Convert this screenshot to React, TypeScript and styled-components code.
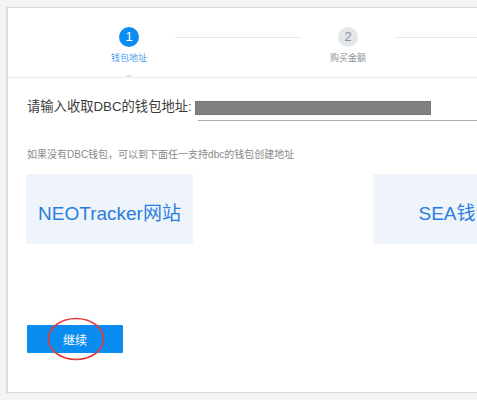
import React from "react";
import styled, { createGlobalStyle } from "styled-components";

const Global = createGlobalStyle`
  html, body { margin: 0; padding: 0; background: #f3f3f3; overflow: hidden; }
  body { font-family: "Liberation Sans", "Noto Sans CJK SC", sans-serif; }
  * { box-sizing: border-box; }
`;

const Page = styled.div`
  width: 477px;
  height: 400px;
  padding: 7px 0 0 6px;
  overflow: hidden;
`;

const Panel = styled.div`
  width: 720px;
  height: 386px;
  background: #fff;
  border: 1px solid #d3d9e0;
  border-left: 2px solid #d9dee4;
`;

const Header = styled.div`
  display: flex;
  align-items: flex-start;
  padding: 19px 0 0 91px;
  border-bottom: 1px solid #e9ecf1;
  height: 70px;
`;

const Step = styled.div`
  width: 60px;
  display: flex;
  flex-direction: column;
  align-items: center;
`;

const Circle = styled.div<{ $active?: boolean }>`
  width: 20px;
  height: 20px;
  border-radius: 50%;
  background: ${(p) => (p.$active ? "#0a8cf0" : "#e2e6eb")};
  color: ${(p) => (p.$active ? "#fff" : "#8a929c")};
  font-size: 13px;
  line-height: 20px;
  text-align: center;
`;

const StepLabel = styled.div<{ $active?: boolean }>`
  margin-top: 5px;
  font-size: 9px;
  line-height: 12px;
  color: ${(p) => (p.$active ? "#4c9df0" : "#8a8f96")};
  white-space: nowrap;
`;

const Pointer = styled.div`
  margin-top: 10px;
  width: 0;
  height: 0;
  border-left: 4px solid transparent;
  border-right: 4px solid transparent;
  border-bottom: 3px solid #e1e5ea;
`;

const Connector = styled.div`
  width: 127px;
  height: 1px;
  margin: 10px 16px 0;
  background: #e6e9ef;
`;

const Body = styled.div`
  padding-left: 19px;
`;

const InputRow = styled.div`
  display: flex;
  align-items: flex-start;
  margin-top: 19px;
`;

const FieldLabel = styled.div`
  font-size: 13.3px;
  line-height: 20px;
  color: #3c3c3c;
  white-space: nowrap;
`;

const Field = styled.div`
  flex: 1;
  margin: 2px 0 0 6px;
  height: 22px;
  border-bottom: 1px solid #a9adb3;
`;

const Redacted = styled.div`
  margin: 2px 0 0 -3px;
  width: 236px;
  height: 14px;
  background: #808080;
  border: 1px solid #767676;
`;

const Help = styled.div`
  margin-top: 27px;
  font-size: 10px;
  line-height: 14px;
  color: #8a8a8a;
`;

const Cards = styled.div`
  display: flex;
  gap: 180px;
  margin-top: 12px;
  margin-left: -1px;
`;

const Card = styled.div`
  width: 167px;
  height: 70px;
  flex-shrink: 0;
  border-radius: 2px;
  background: #eff4fa;
  color: #2a7de0;
  font-size: 19px;
  display: flex;
  align-items: center;
  justify-content: center;
  padding-top: 4px;
  white-space: nowrap;
`;

const ButtonWrap = styled.div`
  position: relative;
  width: 96px;
  margin-top: 81px;
`;

const Button = styled.button`
  width: 96px;
  height: 28px;
  border: none;
  border-radius: 1px;
  background: #0a8cf0;
  color: #fff;
  font-family: inherit;
  font-size: 12px;
  padding: 0;
`;

const Mark = styled.svg`
  position: absolute;
  left: 19.5px;
  top: -8.5px;
  pointer-events: none;
`;

export default function App() {
  return (
    <>
      <Global />
      <Page>
        <Panel>
          <Header>
            <Step>
              <Circle $active>1</Circle>
              <StepLabel $active>钱包地址</StepLabel>
              <Pointer />
            </Step>
            <Connector />
            <Step>
              <Circle>2</Circle>
              <StepLabel>购买金额</StepLabel>
            </Step>
            <Connector />
          </Header>
          <Body>
            <InputRow>
              <FieldLabel>请输入收取DBC的钱包地址:</FieldLabel>
              <Field>
                <Redacted />
              </Field>
            </InputRow>
            <Help>如果没有DBC钱包，可以到下面任一支持dbc的钱包创建地址</Help>
            <Cards>
              <Card>NEOTracker网站</Card>
              <Card>SEA钱包</Card>
            </Cards>
            <ButtonWrap>
              <Button>继续</Button>
              <Mark width="58" height="44" viewBox="0 0 58 44">
                <ellipse cx="29" cy="22" rx="27.5" ry="20.5" fill="none" stroke="#e53a3a" strokeWidth="1.6" />
              </Mark>
            </ButtonWrap>
          </Body>
        </Panel>
      </Page>
    </>
  );
}
